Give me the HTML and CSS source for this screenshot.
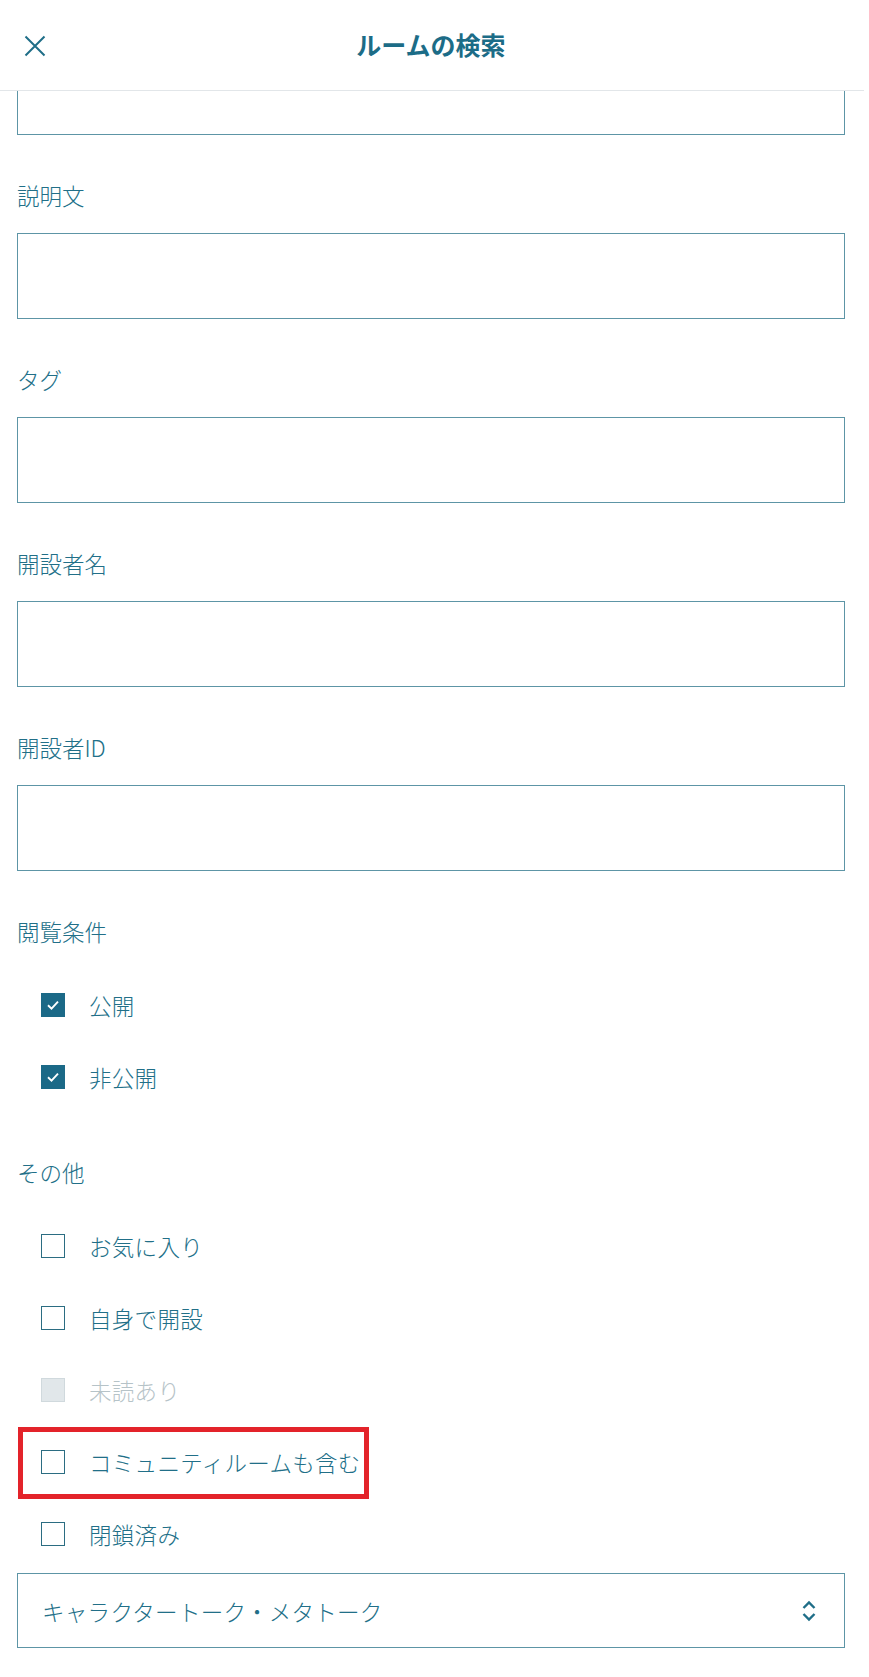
FILE: index.html
```html
<!DOCTYPE html>
<html lang="ja">
<head>
<meta charset="utf-8">
<title>ルームの検索</title>
<link rel="stylesheet" href="styles.css">
</head>
<body>
<div class="page">
  <header class="header">
    <div class="close">
      <svg width="22" height="22" viewBox="0 0 22 22"><path d="M1.5 1.5 L20.5 20.5 M20.5 1.5 L1.5 20.5" stroke="#1f6e88" stroke-width="2" fill="none"/></svg>
    </div>
    <h1 class="title">ルームの検索</h1>
    <div></div>
  </header>
  <main class="content">
    <div class="cut-input"></div>

    <div class="field">
      <div class="label">説明文</div>
      <div class="input"></div>
    </div>
    <div class="field">
      <div class="label">タグ</div>
      <div class="input"></div>
    </div>
    <div class="field">
      <div class="label">開設者名</div>
      <div class="input"></div>
    </div>
    <div class="field">
      <div class="label">開設者ID</div>
      <div class="input"></div>
    </div>

    <div class="group">
      <div class="label">閲覧条件</div>
      <div class="rows">
        <div class="row"><span class="box checked"><svg width="16" height="16" viewBox="0 0 16 16"><path d="M3 8.3 L6.5 11.6 L13 4.6" stroke="#fff" stroke-width="1.9" fill="none"/></svg></span><span class="text">公開</span></div>
        <div class="row"><span class="box checked"><svg width="16" height="16" viewBox="0 0 16 16"><path d="M3 8.3 L6.5 11.6 L13 4.6" stroke="#fff" stroke-width="1.9" fill="none"/></svg></span><span class="text">非公開</span></div>
      </div>
    </div>

    <div class="group group-other">
      <div class="label">その他</div>
      <div class="rows">
        <div class="row"><span class="box"></span><span class="text">お気に入り</span></div>
        <div class="row"><span class="box"></span><span class="text">自身で開設</span></div>
        <div class="row disabled"><span class="box"></span><span class="text">未読あり</span></div>
        <div class="row highlight"><span class="box"></span><span class="text">コミュニティルームも含む</span></div>
        <div class="row"><span class="box"></span><span class="text">閉鎖済み</span></div>
      </div>
    </div>

    <div class="select">
      <span class="select-text">キャラクタートーク・メタトーク</span>
      <svg class="chev" width="14" height="22" viewBox="0 0 14 22"><path d="M1.5 8 L7 2.5 L12.5 8 M1.5 14 L7 19.5 L12.5 14" stroke="#1f6e88" stroke-width="2.4" fill="none"/></svg>
    </div>
  </main>
</div>
</body>
</html>
```

FILE: styles.css
```css
html, body {
  margin: 0;
  padding: 0;
  background: #ffffff;
}
body {
  font-family: "Noto Sans CJK JP", "Noto Sans", sans-serif;
  color: #216f88;
}
.page {
  width: 864px;
}
.header {
  height: 90px;
  border-bottom: 1px solid #e2e6e9;
  display: grid;
  grid-template-columns: 1fr auto 1fr;
  align-items: center;
  box-sizing: content-box;
}
.close {
  padding-left: 24px;
  padding-top: 2px;
  display: flex;
}
.title {
  margin: 0;
  font-size: 25px;
  font-weight: 700;
  color: #1c6c87;
  line-height: 32px;
  padding-bottom: 2px;
  padding-right: 2px;
}
.content {
  width: 828px;
  margin-left: 17px;
  padding-bottom: 40px;
}
.cut-input {
  height: 44px;
  box-sizing: border-box;
  border: 1px solid #5d95a6;
  border-top: none;
}
.label {
  font-size: 22.5px;
  font-weight: 300;
  line-height: 32px;
  margin-top: 44px;
  color: #216f88;
}
.input {
  margin-top: 22px;
  height: 86px;
  box-sizing: border-box;
  border: 1px solid #5d95a6;
}
.rows {
  margin-top: 22px;
  display: flex;
  flex-direction: column;
}
.group-other .label {
  margin-top: 43px;
}
.row {
  position: relative;
  height: 72px;
  display: flex;
  align-items: center;
  padding-left: 24px;
}
.box {
  width: 24px;
  height: 24px;
  box-sizing: border-box;
  border: 1.5px solid #2b6d82;
  background: #fff;
  display: flex;
  align-items: center;
  justify-content: center;
  flex: none;
}
.box.checked {
  background: #1b6987;
  border-color: #1b6987;
}
.text {
  margin-left: 24px;
  font-size: 22.5px;
  font-weight: 300;
  line-height: 32px;
  letter-spacing: 0.3px;
  color: #216f88;
}
.row.disabled .box {
  background: #e1e7ea;
  border-color: #d0d9dd;
}
.row.disabled .text {
  color: #b6c3c8;
}
.row.highlight::after {
  content: "";
  position: absolute;
  left: 1px;
  top: 1px;
  width: 351px;
  height: 72px;
  box-sizing: border-box;
  border: 5px solid #e3232a;
  pointer-events: none;
}
.select {
  margin-top: 3px;
  height: 75px;
  box-sizing: border-box;
  border: 1px solid #5d95a6;
  display: flex;
  align-items: center;
  justify-content: space-between;
  padding: 0 28px 0 24px;
}
.select-text {
  font-size: 22.5px;
  font-weight: 300;
  line-height: 32px;
  letter-spacing: 0.3px;
  color: #216f88;
}
.chev {
  display: block;
}
```
